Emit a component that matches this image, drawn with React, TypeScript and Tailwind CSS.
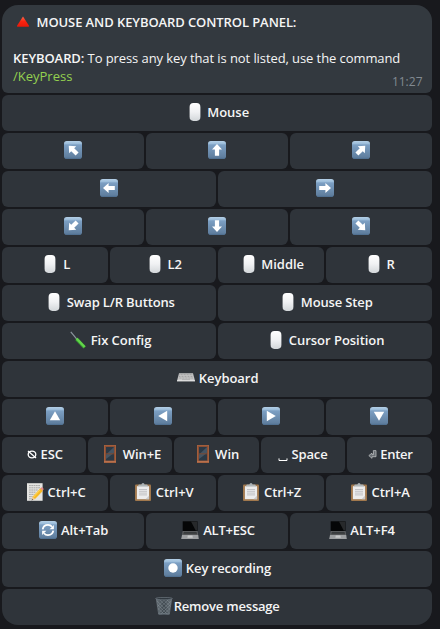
import type { ReactNode } from 'react';

function Svg({ children, className = '' }: { children: ReactNode; className?: string }) {
  return (
    <svg width="18" height="18" viewBox="0 0 18 18" className={`block shrink-0 ${className}`} aria-hidden="true">
      {children}
    </svg>
  );
}

// Shared gradients used by the icons.
function Defs() {
  return (
    <svg width="0" height="0" className="absolute" aria-hidden="true">
      <defs>
        <linearGradient id="key" x1="0" y1="0" x2="0" y2="1">
          <stop offset="0" stopColor="#b4cfe6" />
          <stop offset="0.14" stopColor="#9dbedb" />
          <stop offset="0.22" stopColor="#7c9fc3" />
          <stop offset="0.9" stopColor="#607f9f" />
          <stop offset="1" stopColor="#4b6b8c" />
        </linearGradient>
        <linearGradient id="mouse" x1="0" y1="0" x2="0" y2="1">
          <stop offset="0" stopColor="#ffffff" />
          <stop offset="0.5" stopColor="#f0f1f3" />
          <stop offset="1" stopColor="#d3d7da" />
        </linearGradient>
        <linearGradient id="red" x1="0" y1="0" x2="0" y2="1">
          <stop offset="0" stopColor="#ff6a4d" />
          <stop offset="0.5" stopColor="#f9240f" />
          <stop offset="1" stopColor="#e8190a" />
        </linearGradient>
        <linearGradient id="bin" x1="0" y1="0" x2="1" y2="0">
          <stop offset="0" stopColor="#6c757c" />
          <stop offset="0.5" stopColor="#3c454c" />
          <stop offset="1" stopColor="#6c757c" />
        </linearGradient>
      </defs>
    </svg>
  );
}

function KeyCap({ children }: { children: ReactNode }) {
  return (
    <Svg>
      <rect x="0" y="0" width="18" height="18" rx="2.8" fill="url(#key)" />
      {children}
    </Svg>
  );
}

function Arrow({ angle }: { angle: number }) {
  return (
    <KeyCap>
      <path
        d="M9 3 L14 8.6 H11.1 V14.8 H6.9 V8.6 H4 Z"
        fill="#fff"
        transform={`rotate(${angle} 9 9)`}
      />
    </KeyCap>
  );
}

function Triangle({ angle }: { angle: number }) {
  return (
    <KeyCap>
      <path d="M9 4.2 L14.2 13.2 H3.8 Z" fill="#fff" transform={`rotate(${angle} 9 9)`} />
    </KeyCap>
  );
}

const Mouse = () => (
  <Svg>
    <rect x="3.6" y="0.1" width="10.8" height="17.8" rx="3.8" fill="url(#mouse)" />
  </Svg>
);

const Screwdriver = () => (
  <Svg>
    <path d="M1.8 0.8 L8 8.4" stroke="#8b969e" strokeWidth="1.2" />
    <path d="M7.4 7.8 L15.6 16.4" stroke="#3aa832" strokeWidth="3.2" />
    <path d="M7.6 7.6 L15.7 16" stroke="#63d44b" strokeWidth="2.2" />
  </Svg>
);

const Keyboard = () => (
  <Svg>
    <path d="M2 4.2 H16 L18 12 H0 Z" fill="#c9c9c9" />
    <path d="M0 11.4 H18 V12.4 H0 Z" fill="#ececec" />
    <path d="M2.4 5.6 H15.6 M2 7.3 H16 M1.7 9 H16.3" stroke="#929292" strokeWidth="0.8" strokeDasharray="1 0.5" />
    <path d="M5 10.6 H13" stroke="#a0a0a0" strokeWidth="0.6" />
  </Svg>
);

const WindowIcon = () => (
  <Svg>
    <rect x="3" y="0" width="12" height="18" fill="#8b4f35" />
    <rect x="3.4" y="0.4" width="11.2" height="17.2" fill="none" stroke="#a8623f" strokeWidth="0.8" />
    <rect x="5" y="2" width="8" height="13.6" fill="#2c3945" />
    <path d="M13 2 V8 L5 14 V9.5 Z" fill="#465563" />
    <path d="M5 8.8 H13" stroke="#80482f" strokeWidth="0.9" />
    <path d="M3 16.6 H15" stroke="#b8714e" strokeWidth="1.4" />
  </Svg>
);

const Memo = () => (
  <Svg>
    <rect x="1" y="0.2" width="15.6" height="17.6" fill="#e4e4e1" />
    <path
      d="M3 2.6 H14.5 M3 4.8 H14 M3 7 H12 M3 9.2 H10 M3 11.4 H8.5 M3 13.6 H6.5 M3 15.8 H6"
      stroke="#969696"
      strokeWidth="0.8"
      strokeDasharray="1.8 0.5"
    />
    <path d="M14.4 5.3 L17 7.7 L9.3 15.8 L6 17 L6.8 13.5 Z" fill="#f7b924" />
    <path d="M13.8 7.2 L7.6 14" stroke="#ffdc62" strokeWidth="0.9" />
    <path d="M14.2 5.4 L15.3 4.4 Q16 4 17 4.9 Q18 5.8 17.4 6.8 L16.6 7.8 Z" fill="#e28a86" />
    <path d="M6.8 13.7 L9 15.9 L5.8 17.2 Z" fill="#ecc99c" />
    <path d="M6.1 16 L7 16.8 L5.5 17.4 Z" fill="#333" />
  </Svg>
);

const Clipboard = () => (
  <Svg>
    <rect x="1" y="1.4" width="16" height="16.6" rx="1" fill="#a1784d" />
    <rect x="2.9" y="3.2" width="12.2" height="13" fill="#ececed" />
    <path d="M5 6.5 H13 M5 8.3 H13 M5 10.1 H13 M5 11.9 H13" stroke="#b8b8ba" strokeWidth="0.8" />
    <path d="M11.5 16.2 L15.1 12.8 V16.2 Z" fill="#c9c9cb" />
    <path d="M4.2 3.6 V2.4 Q4.2 1.6 5.4 1.6 H7.4 Q7.6 0 9 0 Q10.4 0 10.6 1.6 H12.6 Q13.8 1.6 13.8 2.4 V3.6 Z" fill="#a9b0b4" />
    <path d="M4.4 3.3 H13.6" stroke="#d4d8da" strokeWidth="0.6" />
  </Svg>
);

const Refresh = () => (
  <KeyCap>
    <path d="M3.7 8.3 Q4.4 3.9 9 3.9 Q11.6 3.9 13 5.8" fill="none" stroke="#fff" strokeWidth="1.8" />
    <path d="M14.9 3.9 V8.3 H10.6 Z" fill="#fff" />
    <path d="M14.3 9.7 Q13.6 14.1 9 14.1 Q6.4 14.1 5 12.2" fill="none" stroke="#fff" strokeWidth="1.8" />
    <path d="M3.1 14.1 V9.7 H7.4 Z" fill="#fff" />
  </KeyCap>
);

const Laptop = () => (
  <Svg>
    <rect x="1.7" y="0.3" width="14.8" height="9.7" fill="#050607" />
    <path d="M10 0.6 H16.2 V9.5 H14.7 Z" fill="#27292b" />
    <path d="M1.7 10 H16.5 L17.2 14.6 H1 Z" fill="#626466" />
    <path d="M2.6 11.3 H15.7 M2.3 12.8 H16" stroke="#292b2d" strokeWidth="0.9" />
    <path d="M1 14 H17.2 L17.8 18 H0.2 Z" fill="#9d9fa1" />
    <path d="M6.8 14.5 H11.4 L11.8 16.8 H6.4 Z" fill="#c7c8c9" />
  </Svg>
);

const Record = () => (
  <KeyCap>
    <circle cx="9" cy="9" r="4.7" fill="#fff" />
  </KeyCap>
);

const Bin = () => (
  <Svg>
    <path d="M0.8 1.2 H17.2 L14.9 16.6 Q14.7 17.9 13 17.9 H5 Q3.3 17.9 3.1 16.6 Z" fill="url(#bin)" />
    <path
      d="M2 4 L14.4 16 M5 3 L15 12.5 M8.5 3 L15.5 9.5 M12 3 L16 6.5 M2.4 7.5 L12 17 M3 11.5 L9 17 M16 4 L3.6 16 M13 3 L3 12.5 M9.5 3 L2.5 9.5 M15.6 7.5 L6 17 M15 11.5 L9 17"
      stroke="#89939b"
      strokeWidth="0.45"
    />
    <ellipse cx="9" cy="1.6" rx="8.4" ry="1.2" fill="#30383f" stroke="#707a82" strokeWidth="0.7" />
    <path d="M3.4 16.8 H14.6" stroke="#76818a" strokeWidth="0.8" />
  </Svg>
);

const Prohibited = () => (
  <svg width="10" height="18" viewBox="0 0 10 18" className="block shrink-0" aria-hidden="true">
    <ellipse cx="5" cy="9.5" rx="3.8" ry="3.4" fill="none" stroke="#fff" strokeWidth="1.3" />
    <path d="M1 6.1 L9 12.9" stroke="#fff" strokeWidth="1.3" />
  </svg>
);

const SpaceBar = () => (
  <svg width="10" height="18" viewBox="0 0 10 18" className="block shrink-0" aria-hidden="true">
    <path d="M1 13.4 V15.5 H9 V13.4" fill="none" stroke="#fff" strokeWidth="1" />
  </svg>
);

const Return = () => (
  <svg width="9" height="18" viewBox="0 0 9 18" className="block shrink-0" aria-hidden="true">
    <path d="M5.3 5.6 H8 V11.7 H4 V13.3 L0.8 10.6 L4 8.1 V9.6 H5.6 Z" fill="#686d72" stroke="#b9bcbe" strokeWidth="0.8" />
  </svg>
);

type Item = { icon: ReactNode; label?: string; tune?: string };

const rows: Item[][] = [
  [{ icon: <Mouse />, label: 'Mouse', tune: 'gap-[3.4px] pl-px' }],
  [{ icon: <Arrow angle={-45} /> }, { icon: <Arrow angle={0} /> }, { icon: <Arrow angle={45} /> }],
  [{ icon: <Arrow angle={-90} /> }, { icon: <Arrow angle={90} /> }],
  [{ icon: <Arrow angle={-135} /> }, { icon: <Arrow angle={180} /> }, { icon: <Arrow angle={135} /> }],
  [
    { icon: <Mouse />, label: 'L' },
    { icon: <Mouse />, label: 'L2' },
    { icon: <Mouse />, label: 'Middle' },
    { icon: <Mouse />, label: 'R' },
  ],
  [
    { icon: <Mouse />, label: 'Swap L/R Buttons', tune: 'gap-1 pl-[1.5px] tracking-[-0.14px]' },
    { icon: <Mouse />, label: 'Mouse Step', tune: 'gap-1 pl-[1.5px] tracking-[-0.14px]' },
  ],
  [{ icon: <Screwdriver />, label: 'Fix Config', tune: 'gap-1 pl-[2px] tracking-[-0.04px]' }, { icon: <Mouse />, label: 'Cursor Position' }],
  [{ icon: <Keyboard />, label: 'Keyboard' }],
  [
    { icon: <Triangle angle={0} /> },
    { icon: <Triangle angle={-90} /> },
    { icon: <Triangle angle={90} /> },
    { icon: <Triangle angle={180} /> },
  ],
  [
    { icon: <Prohibited />, label: 'ESC', tune: 'gap-1 pl-[1.5px] tracking-[-0.1px]' },
    { icon: <WindowIcon />, label: 'Win+E', tune: 'gap-1 pl-[2px] tracking-[-0.1px]' },
    { icon: <WindowIcon />, label: 'Win', tune: 'gap-[3.4px]' },
    { icon: <SpaceBar />, label: 'Space', tune: 'gap-[3px] tracking-[-0.1px]' },
    { icon: <Return />, label: 'Enter', tune: 'gap-[3.5px] pl-[1.5px] tracking-[-0.3px]' },
  ],
  [
    { icon: <Memo />, label: 'Ctrl+C' },
    { icon: <Clipboard />, label: 'Ctrl+V' },
    { icon: <Clipboard />, label: 'Ctrl+Z' },
    { icon: <Clipboard />, label: 'Ctrl+A' },
  ],
  [
    { icon: <Refresh />, label: 'Alt+Tab' },
    { icon: <Laptop />, label: 'ALT+ESC', tune: 'gap-1 pl-[2px] tracking-[-0.2px]' },
    { icon: <Laptop />, label: 'ALT+F4' },
  ],
  [{ icon: <Record />, label: 'Key recording', tune: 'gap-1 pl-px tracking-[-0.08px]' }],
  [{ icon: <Bin />, label: 'Remove message', tune: 'gap-[0.4px] pl-px tracking-[-0.2px]' }],
];

const columns: Record<number, string> = {
  1: 'grid-cols-1',
  2: 'grid-cols-2',
  3: 'grid-cols-3',
  4: 'grid-cols-4',
  5: 'grid-cols-[84px_84px_85px_84px_85px]',
};

export default function App() {
  return (
    <main className="h-[629px] w-[440px] overflow-hidden bg-[#18191d] pt-[5px] pl-0.5 font-['Open_Sans','Noto_Sans',sans-serif] text-[13px] leading-[18px] text-[#f5f5f5]">
      <Defs />
      <div className="flex w-[430px] flex-col gap-0.5">
        <section className="flex h-[88px] flex-col rounded-t-[16px] rounded-b-md bg-[#33393f] px-[11px] pt-2">
          <h1 className="flex font-semibold tracking-[-0.09px]">
            <Svg className="mr-[4.5px] ml-px">
              <path d="M9 3.4 L15 12.8 Q15.2 13.7 14.3 13.7 H3.7 Q2.8 13.7 3 12.8 Z" fill="url(#red)" />
            </Svg>
            MOUSE AND KEYBOARD CONTROL PANEL:
          </h1>
          <p className="mt-[18px] tracking-[-0.085px] whitespace-nowrap">
            <span className="font-semibold">KEYBOARD:</span> To press any key that is not listed, use the command
          </p>
          <div className="flex justify-between">
            <a className="text-[#94d14f]">/KeyPress</a>
            <time className="mt-1.5 -mr-[1.5px] text-xs leading-[18px] text-[#828a91]">11:27</time>
          </div>
        </section>
        {rows.map((row, i) => (
          <div key={i} className={`grid h-9 gap-0.5 ${columns[row.length]}`}>
            {row.map((item, j) => (
              <button
                key={j}
                className={`flex min-w-0 items-center justify-center rounded-md bg-[#2f343a] pb-0.5 font-semibold whitespace-nowrap ${
                  item.label ? item.tune ?? 'gap-[3.8px] pl-[1.5px] tracking-[-0.04px]' : ''
                } ${i === rows.length - 1 ? 'rounded-b-[16px]' : ''}`}
              >
                {item.icon}
                {item.label && <span>{item.label}</span>}
              </button>
            ))}
          </div>
        ))}
      </div>
    </main>
  );
}
